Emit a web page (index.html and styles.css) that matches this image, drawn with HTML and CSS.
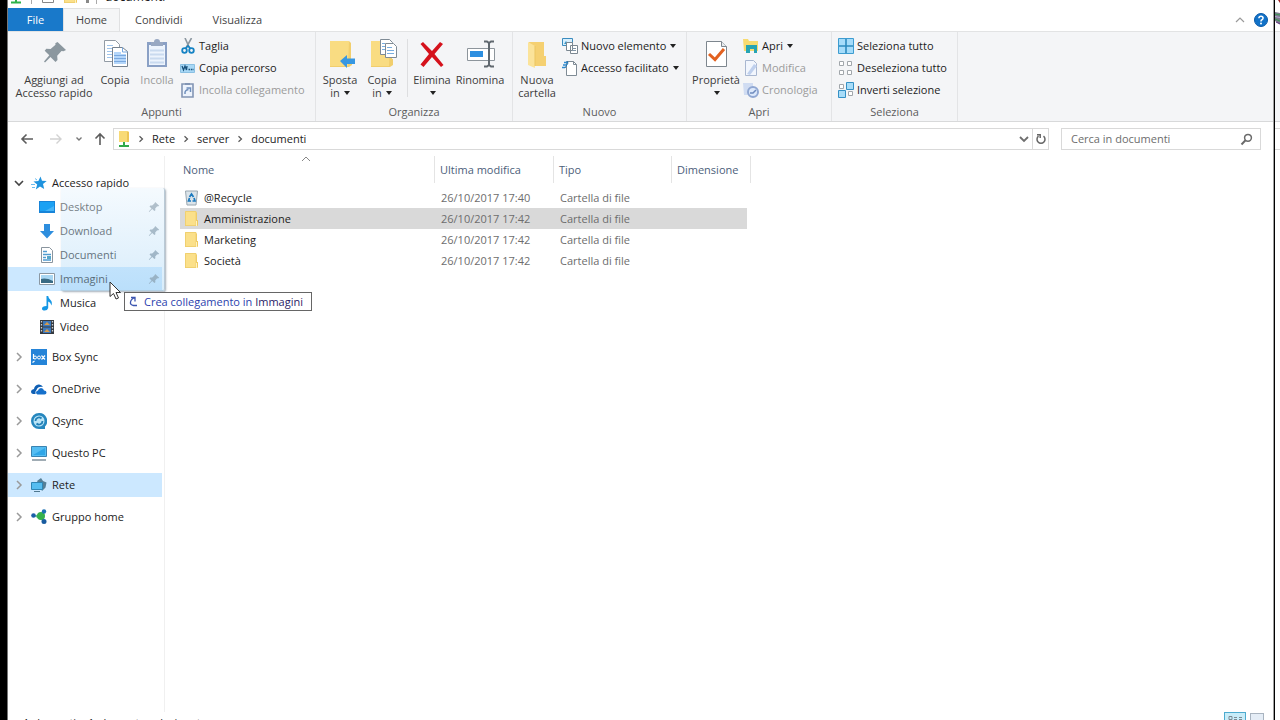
FILE: index.html
```html
<!DOCTYPE html>
<html lang="it">
<head>
<meta charset="utf-8">
<title>documenti</title>
<link rel="stylesheet" href="styles.css">
</head>
<body>
<svg class="defs" width="0" height="0" aria-hidden="true">
  <defs>
    <symbol id="folder" viewBox="0 0 16 16"><path d="M1 0h11v15H1z" fill="#fbe08a"/><path d="M12 1l1 1v7h1v5.500l-1 .5H1v-1h11z" fill="#efc95f"/><path d="M1.500.5h10.500v14H1.500z" fill="none" stroke="#f0d070"/><path d="M12.500 10v5" stroke="#fff3c0"/></symbol>
    <symbol id="pin" viewBox="0 0 12 12"><path d="M7.200 1l4 3.800-1.200.6-.8-.2-2 2.200.2 1.900-1 .8-2.200-2.200L1.200 11l-.4-.4 2.700-3.200-2-1.900.8-1 1.900.1 2.200-2z" fill="#8d9aa4"/></symbol>
    <symbol id="next" viewBox="0 0 10 10"><path d="M3 1l4 4-4 4" fill="none" stroke="#9a9a9a" stroke-width="1.500"/></symbol>
    <symbol id="crumb" viewBox="0 0 8 8"><path d="M2.500 1.200l3 2.800-3 2.800" fill="none" stroke="#555" stroke-width="1.200"/></symbol>
  </defs>
</svg>
<div class="edge-left"></div>
<main class="window">
  <header class="titlebar">
    <svg width="16" height="16" viewBox="0 0 16 16"><path d="M4 1h8v10H4z" fill="#f6d672"/><path d="M8 11v3M3 14.500h10" stroke="#2db24a" stroke-width="2"/></svg>
    <span class="title-sep"></span>
    <svg class="title-page" width="16" height="16" viewBox="0 0 16 16"><path d="M2.500 1.500h11v13h-11z" fill="#fff" stroke="#888"/><path d="M5 10l2 2 3-3" stroke="#d77" fill="none"/></svg>
    <svg class="title-folder" width="16" height="16"><use href="#folder"/></svg>
    <span class="title-mark"></span>
    <span class="title-sep"></span>
    <h1 class="title-text">documenti</h1>
  </header>
  <nav class="tabs">
    <button class="tab tab-file">File</button>
    <button class="tab tab-home">Home</button>
    <button class="tab">Condividi</button>
    <button class="tab">Visualizza</button>
    <span class="grow"></span>
    <button class="tab-tool" aria-label="Riduci barra multifunzione"><svg width="10" height="8" viewBox="0 0 10 8"><path d="M1 6l4-4 4 4" fill="none" stroke="#9a9a9a" stroke-width="1.200"/></svg></button>
    <button class="tab-tool" aria-label="Guida"><svg width="14" height="14" viewBox="0 0 14 14"><circle cx="7" cy="7" r="6.500" fill="#1272c8" stroke="#0a5aa8"/><path d="M4.900 5.300Q5 3.300 7 3.300t2.100 1.800Q9.100 6.200 7.600 7 7 7.300 7 8.500" fill="none" stroke="#fff" stroke-width="1.500"/><circle cx="7" cy="10.500" r="1" fill="#fff"/></svg></button>
  </nav>

  <section class="ribbon">
    <div class="group g-appunti">
      <div class="tools">
        <button class="big w-wide"><svg width="32" height="34" viewBox="0 0 32 34"><path d="M19.500 7l8.500 8-2.500 1.300-2-.3-4.300 4.700.3 4.200-2 2-5-5-5.500 5.600-1-1 5.300-6.300-4.600-4.400 1.600-2 4.300.3 4.900-4.400-.2-1.500z" fill="#8b979f"/></svg><span>Aggiungi ad<br>Accesso rapido</span></button>
        <button class="big w-copy"><svg width="32" height="34" viewBox="0 0 32 34"><path d="M5.500 5.500h11l4 4v17h-15z" fill="#fff" stroke="#929ba5"/><path d="M8 10.500h6M8 13.500h10M8 16.500h10M8 19.500h10M8 22.500h10" stroke="#9fc4ec"/><path d="M13.500 12.500h10l5 4v15h-15z" fill="#fff" stroke="#76828f"/><path d="M15 17h7v2h5v10H15z" fill="#b4d6fa"/><path d="M23.500 12.500v4.500h5M15 20.500h12M15 23.500h12M15 26.500h12" stroke="#79a8df" fill="none"/></svg>Copia</button>
        <button class="big w-copy off"><svg width="32" height="34" viewBox="0 0 32 34"><path d="M6 7h20v25H6z" fill="#8aa0c5"/><path d="M8 10h16v20H8z" fill="#edf4fd"/><path d="M9 15.500h14M9 19.500h14M9 23.500h14M9 27.500h14" stroke="#c9daef" stroke-width="2"/><path d="M10 7h3q0-3 3-3t3 3h3v4H10z" fill="#98a8c2"/></svg>Incolla</button>
        <div class="stack">
          <button class="small"><svg width="16" height="16" viewBox="0 0 16 16"><path d="M5 0l4.500 10M11.500 0L6 10" stroke="#8c97a0" stroke-width="1.600"/><circle cx="4.500" cy="12.500" r="2.300" fill="none" stroke="#1683c4" stroke-width="1.800"/><circle cx="11.500" cy="12.500" r="2.300" fill="none" stroke="#1683c4" stroke-width="1.800"/><path d="M5.500 10.500L8 8l2.500 2.500" stroke="#1683c4" stroke-width="1.600" fill="none"/></svg>Taglia</button>
          <button class="small"><svg width="16" height="16" viewBox="0 0 16 16"><path d="M.5 4.500h14v8H.5z" fill="#a8d8f6" stroke="#8ac0e3"/><path d="M2 6l1.500 4L5 6l1.500 4L7 6M8.500 9.500h1.500M10.800 9.500h1.200M12.500 9.500h1" stroke="#19517b" stroke-width="1.300" fill="none"/></svg>Copia percorso</button>
          <button class="small off"><svg width="16" height="16" viewBox="0 0 16 16"><path d="M2 2h11v13H2z" fill="#edf3fc" stroke="#8295b4" stroke-width="1.600"/><path d="M5 1h5v2H5z" fill="#8295b4"/><path d="M5 12q-.5-4 3.500-4.500M6.500 6h4v4" fill="none" stroke="#6f8fbc" stroke-width="1.500"/></svg>Incolla collegamento</button>
        </div>
      </div>
      <h2 class="group-name">Appunti</h2>
    </div>
    <div class="group g-organizza">
      <div class="tools">
        <button class="big w-copy"><svg width="32" height="34" viewBox="0 0 32 34"><path d="M6 6h19v26H6z" fill="#f9dc82"/><path d="M25 6l2 2v16h1v6l-3 2H6v-1h18z" fill="#f1ce6d"/><path d="M16 26l7-6v3.500h8v5.500h-8v4z" fill="#3797e1"/></svg>Sposta<span>in <i class="caret"></i></span></button>
        <button class="big w-copy"><svg width="32" height="34" viewBox="0 0 32 34"><path d="M5 6h19v26H5z" fill="#f9dc82"/><path d="M24 6l2 2v16h1v6l-3 2H5v-1h18z" fill="#f1ce6d"/><path d="M14.500 4.500h9l3 3v12h-12z" fill="#fff" stroke="#7f8b95"/><path d="M19.500 8.500h8l3 3v11h-11z" fill="#fff" stroke="#7f8b95"/><path d="M16 8.500h3M16 11.500h3M16 14.500h3M21 12.500h5M21 15.500h7M21 18.500h7" stroke="#79aee0"/></svg>Copia<span>in <i class="caret"></i></span></button>
        <span class="rule"></span>
        <button class="big w-del"><svg width="32" height="34" viewBox="0 0 32 34"><path d="M4.500 9l2.500-2 9 9 8-9 3 2-8.500 10L27.500 30l-2.500 2-9-10-8.500 10-3-2.500L13 19z" fill="#d5121c"/></svg>Elimina<span><i class="caret"></i></span></button>
        <button class="big w-ren"><svg width="32" height="34" viewBox="0 0 32 34"><path d="M3.500 13.500h27v12h-27z" fill="#fff" stroke="#8d959c"/><path d="M6 16h13v6H6z" fill="#2d8fe0"/><path d="M20 6.500h3l2 1.500 2-1.500h3M20 31.500h3l2-1.500 2 1.500h3M25 8v22" fill="none" stroke="#60686f" stroke-width="2"/></svg>Rinomina</button>
      </div>
      <h2 class="group-name">Organizza</h2>
    </div>
    <div class="group g-nuovo">
      <div class="tools">
        <button class="big w-new"><svg width="32" height="34" viewBox="0 0 32 34"><path d="M8 7h15v14h2v10H11z" fill="#f5d071"/><path d="M7 7l7 4v22l-7-3z" fill="#fbe39a"/><path d="M14 11v20" stroke="#ebc562"/></svg><span>Nuova<br>cartella</span></button>
        <div class="stack">
          <button class="small"><svg width="16" height="16" viewBox="0 0 16 16"><path d="M.5.500h10v7H.500z" fill="#d8effd" stroke="#3b8cbf"/><path d="M2 6l2-3 2 3" fill="#3996c7"/><path d="M4.500 4.500h6v8h-6zM8.500 7.500h7v8h-7z" fill="#fff" stroke="#7b8791"/><path d="M10 10.500h4M10 12.500h4" stroke="#8194a5"/></svg>Nuovo elemento <i class="caret"></i></button>
          <button class="small"><svg width="16" height="16" viewBox="0 0 16 16"><path d="M4.500 1.500h7l3 3v11h-10z" fill="#fff" stroke="#7f8b95"/><path d="M11.500 1.500v3h3" fill="none" stroke="#7f8b95"/><path d="M2 2.500h4M1 5h4M0 7.500h3" stroke="#2e8bd0" stroke-width="1.500"/><path d="M5 1l1 2-3 5" stroke="#2574af" fill="none"/></svg>Accesso facilitato <i class="caret"></i></button>
        </div>
      </div>
      <h2 class="group-name">Nuovo</h2>
    </div>
    <div class="group g-apri">
      <div class="tools">
        <button class="big w-prop"><svg width="32" height="34" viewBox="0 0 32 34"><path d="M6.500 6.500h15l5 5v20h-20z" fill="#fff" stroke="#7d868e"/><path d="M21.500 6.500v5h5" fill="#e7ebee" stroke="#7d868e"/><path d="M9 19l6 5.500L24 14" fill="none" stroke="#e26120" stroke-width="3"/></svg>Proprietà<span><i class="caret"></i></span></button>
        <div class="stack">
          <button class="small"><svg width="16" height="16" viewBox="0 0 16 16"><path d="M0 1h5l1 2h9v10H1z" fill="#f8db70"/><path d="M3 15V7h11v8h-3v-4H7v4z" fill="#27a4b3"/></svg>Apri <i class="caret"></i></button>
          <button class="small off"><svg width="16" height="16" viewBox="0 0 16 16"><path d="M2.500.5h8l3 3v12h-11z" fill="#f2f6fd" stroke="#a9b7d0"/><path d="M4 14l7-10 3 2-7 9z" fill="#bfd0ed"/></svg>Modifica</button>
          <button class="small off"><svg width="16" height="16" viewBox="0 0 16 16"><path d="M0 1h10v12H1z" fill="#d0dcf2"/><circle cx="10" cy="10" r="5" fill="#dce8fb" stroke="#90a7d2" stroke-width="2"/><path d="M7 11h3l3-3" fill="none" stroke="#6e8abd" stroke-width="1.500"/></svg>Cronologia</button>
        </div>
      </div>
      <h2 class="group-name">Apri</h2>
    </div>
    <div class="group g-seleziona">
      <div class="tools">
        <div class="stack">
          <button class="small"><svg width="16" height="16" viewBox="0 0 16 16"><path d="M.5.5h15v15H.5z" fill="#a5dcfa" stroke="#3d9cd0"/><path d="M8 1v14M1 8h14" stroke="#2c8abf" stroke-width="1.600"/></svg>Seleziona tutto</button>
          <button class="small"><svg width="16" height="16" viewBox="0 0 16 16"><path d="M1.500 1.500h4v4h-4zM9.500 1.500h4v4h-4zM1.500 10.500h4v4h-4zM9.500 10.500h4v4h-4z" fill="#fff" stroke="#a1a6ab"/></svg>Deseleziona tutto</button>
          <button class="small"><svg width="16" height="16" viewBox="0 0 16 16"><path d="M1.500 2.500h4v4h-4zM10.500 9.500h4v4h-4z" fill="#fff" stroke="#a1a6ab"/><path d="M8.500.5h7v7h-7zM.5 8.500h7v7h-7z" fill="#a8dcf8" stroke="#3490c5"/></svg>Inverti selezione</button>
        </div>
      </div>
      <h2 class="group-name">Seleziona</h2>
    </div>
  </section>

  <div class="addressbar">
    <div class="history">
      <button class="nav-btn b-back" aria-label="Indietro"><svg width="14" height="12" viewBox="0 0 14 12"><path d="M13 6H2M6.500 1.500L2 6l4.500 4.500" fill="none" stroke="#5d5d5d" stroke-width="1.600"/></svg></button>
      <button class="nav-btn b-fwd" aria-label="Avanti"><svg width="14" height="12" viewBox="0 0 14 12"><path d="M1 6h11M7.500 1.500L12 6l-4.500 4.500" fill="none" stroke="#d2d2d2" stroke-width="1.400"/></svg></button>
      <button class="nav-btn b-rec" aria-label="Percorsi recenti"><svg width="8" height="6" viewBox="0 0 8 6"><path d="M1.500 1.500L4 4l2.500-2.500" fill="none" stroke="#777" stroke-width="1.400"/></svg></button>
      <button class="nav-btn b-up" aria-label="Su"><svg width="12" height="14" viewBox="0 0 12 14"><path d="M6 13V2M1.500 6.500L6 2l4.500 4.500" fill="none" stroke="#5d5d5d" stroke-width="1.600"/></svg></button>
    </div>
    <div class="path">
      <svg class="path-icon" width="16" height="18" viewBox="0 0 16 18"><path d="M3 1h9l1 1v10H3z" fill="#f8da76"/><path d="M12 2v10" stroke="#e8be4d" stroke-width="1.500"/><path d="M8 12v3M3 16h10" stroke="#30a949" stroke-width="2"/></svg>
      <svg class="crumb" width="8" height="8"><use href="#crumb"/></svg><a class="part" href="#">Rete</a>
      <svg class="crumb" width="8" height="8"><use href="#crumb"/></svg><a class="part" href="#">server</a>
      <svg class="crumb" width="8" height="8"><use href="#crumb"/></svg><a class="part" href="#">documenti</a>
      <span class="grow"></span>
      <button class="path-btn" aria-label="Percorsi precedenti"><svg width="10" height="8" viewBox="0 0 10 8"><path d="M1 2l4 4 4-4" fill="none" stroke="#6e6e6e" stroke-width="1.800"/></svg></button>
      <button class="path-btn path-refresh" aria-label="Aggiorna"><svg width="12" height="12" viewBox="0 0 12 12"><path d="M8.500 3.200a4 4 0 1 1-5 0M2 1.800h3.200V5" fill="none" stroke="#666" stroke-width="1.500"/></svg></button>
    </div>
    <label class="search">
      <input class="search-input" type="text" placeholder="Cerca in documenti" aria-label="Cerca in documenti">
      <svg width="13" height="13" viewBox="0 0 13 13"><circle cx="8" cy="4.800" r="3.400" fill="none" stroke="#6a6a6a" stroke-width="1.500"/><path d="M5.500 7.300L1.500 11.500" stroke="#6a6a6a" stroke-width="2"/></svg>
    </label>
  </div>

  <div class="content">
    <nav class="tree">
      <a class="node" href="#"><svg class="arrow" width="10" height="10" viewBox="0 0 10 10"><path d="M1 3l4 4 4-4" fill="none" stroke="#444" stroke-width="1.600"/></svg><svg width="16" height="16" viewBox="0 0 16 16"><path d="M9.500 1.500l1.500 4.300 4.700.3-3.700 3 1.200 5-4.200-2.600-4.200 3.100 1.400-5L2.500 6.500l4.900-.6z" fill="#1f93de"/><path d="M0 9.500h4M1 12.500h3M4 3.500l2 1.500" stroke="#6cbcee"/></svg>Accesso rapido</a>
      <div class="branch">
        <a class="node sub" href="#"><svg width="16" height="16" viewBox="0 0 16 16"><path d="M0 2h16v12H0z" fill="#1784d8"/><path d="M1 3h14v9H1z" fill="#1ba1f3"/><path d="M6 12h9V7z" fill="#47b5f7"/></svg>Desktop<svg class="pin" width="12" height="12"><use href="#pin"/></svg></a>
        <a class="node sub" href="#"><svg width="16" height="16" viewBox="0 0 16 16"><path d="M5 1h6v7h4l-7 7.500L1 8h4z" fill="#2e8ede"/></svg>Download<svg class="pin" width="12" height="12"><use href="#pin"/></svg></a>
        <a class="node sub" href="#"><svg width="16" height="16" viewBox="0 0 16 16"><path d="M2.500.5h8l3 3v12h-11z" fill="#fff" stroke="#8a959e"/><path d="M4 4.500h4M4 7.500h8M4 10.500h3M4 13h8" stroke="#4f9bd0" stroke-width="1.500"/><path d="M8 9h4v3H8z" fill="#55a6c9"/></svg>Documenti<svg class="pin" width="12" height="12"><use href="#pin"/></svg></a>
        <a class="node sub target" href="#"><svg width="16" height="16" viewBox="0 0 16 16"><path d="M.5 2.500h15v11H.5z" fill="#fff" stroke="#8b98a3"/><path d="M2 4h12v8H2z" fill="#a9d7f3"/><path d="M2 8q5-1.500 12 2v2H2z" fill="#396a83"/></svg>Immagini<svg class="pin" width="12" height="12"><use href="#pin"/></svg></a>
        <a class="node sub" href="#"><svg width="16" height="16" viewBox="0 0 16 16"><path d="M7.500 1h1.700q.3 2.500 2.300 4t1 5.500q-1-3.500-3.300-4v6.500q-.7 2.500-3.500 2.500T3 13.500q0-2.500 4.500-2.500z" fill="#1597e5"/></svg>Musica</a>
        <a class="node sub" href="#"><svg width="16" height="16" viewBox="0 0 16 16"><path d="M1 1h14v14H1z" fill="#353a40"/><path d="M4 2h8v5.500H4z" fill="#3c78bd"/><path d="M4 8.500h8V14H4z" fill="#3c78bd"/><path d="M5 6l3-3 3 3zM5 13l3-3 3 3z" fill="#d59b4c"/><path d="M2.500 2v12M13.500 2v12" stroke="#c9ced3" stroke-width="1.300" stroke-dasharray="1.500 1.500"/></svg>Video</a>
      </div>
      <div class="roots">
        <a class="node" href="#"><svg class="arrow" width="10" height="10"><use href="#next"/></svg><svg width="16" height="16" viewBox="0 0 16 16"><path d="M0 0h16v16H0z" fill="#2584d8"/><path d="M2.500 5v5M10.500 6.500l3.500 4M14 6.500l-3.500 4M1.500 13.500l2-1.500" stroke="#fff" stroke-width="1.200"/><circle cx="4" cy="8.500" r="1.500" fill="none" stroke="#fff"/><circle cx="8" cy="8.500" r="1.500" fill="none" stroke="#fff"/></svg>Box Sync</a>
        <a class="node" href="#"><svg class="arrow" width="10" height="10"><use href="#next"/></svg><svg width="16" height="16" viewBox="0 0 16 16"><path d="M0 11q0-2.500 3-3 .5-4 4.500-4.500 3-.3 4.500 2.500Q7 5 5.500 9 4 10 4.500 13H2q-2-.5-2-2z" fill="#0f5fb3"/><path d="M6.500 13.500q-1.500-.5-1.500-2t2-2Q7.500 7 10 7t3 2.500q2.500 0 2.500 2t-2 2z" fill="#1670cb"/></svg>OneDrive</a>
        <a class="node" href="#"><svg class="arrow" width="10" height="10"><use href="#next"/></svg><svg width="16" height="16" viewBox="0 0 16 16"><path d="M8 0a8 8 0 1 0 0 16h6v-2.500A8 8 0 0 0 8 0z" fill="#2687be"/><circle cx="8" cy="8" r="5.500" fill="#b9e4f7"/><path d="M4.500 8A3.500 3.500 0 0 1 10.500 5.500M11.500 8A3.500 3.500 0 0 1 5.500 10.500" fill="none" stroke="#2380b6" stroke-width="1.800"/></svg>Qsync</a>
        <a class="node" href="#"><svg class="arrow" width="10" height="10"><use href="#next"/></svg><svg width="16" height="16" viewBox="0 0 16 16"><path d="M.5 1.500h15v10H.5z" fill="#55bdf2" stroke="#3a83b1"/><path d="M2 10l12-7v7z" fill="#2fa6e7"/><path d="M1 15h14" stroke="#81909b" stroke-width="1.500"/></svg>Questo PC</a>
        <a class="node current" href="#"><svg class="arrow" width="10" height="10"><use href="#next"/></svg><svg width="16" height="16" viewBox="0 0 16 16"><path d="M6 4l4-3 2 3 3.500 1.500-1 5L11 14z" fill="#547f97"/><path d="M.5 5.500h11v7H.5z" fill="#55bdf0" stroke="#2f86b5"/><path d="M3 14.500h6" stroke="#50788f"/></svg>Rete</a>
        <a class="node" href="#"><svg class="arrow" width="10" height="10"><use href="#next"/></svg><svg width="16" height="16" viewBox="0 0 16 16"><path d="M3 7l9-4v9z" fill="#5cbd8c"/><circle cx="2.500" cy="6.500" r="2.300" fill="#1b5fa8"/><circle cx="10" cy="7" r="4" fill="#36b04c"/><circle cx="13" cy="2.500" r="2.200" fill="#1b70b2"/><circle cx="13" cy="12.500" r="2.500" fill="#185b9f"/></svg>Gruppo home</a>
      </div>
    </nav>

    <section class="files">
      <svg class="sort" width="10" height="6" viewBox="0 0 10 6"><path d="M1 5l4-4 4 4" fill="none" stroke="#888"/></svg>
      <table class="list">
        <thead>
          <tr><th class="c-name">Nome</th><th class="c-date">Ultima modifica</th><th class="c-type">Tipo</th><th class="c-size">Dimensione</th><th class="c-end"></th></tr>
        </thead>
        <tbody>
          <tr><td><span class="file"><svg width="16" height="16" viewBox="0 0 16 16"><path d="M1.500 1h12l-1.500 14H3z" fill="#dbe4ea" stroke="#9aa7b0"/><path d="M5.500 7l2-3 2 3M10 8l1 3H8.500M7 11H4.500L5.500 8" fill="none" stroke="#1c79be" stroke-width="1.700"/></svg>@Recycle</span></td><td>26/10/2017 17:40</td><td>Cartella di file</td><td></td></tr>
          <tr class="picked"><td><span class="file"><svg width="16" height="16"><use href="#folder"/></svg>Amministrazione</span></td><td>26/10/2017 17:42</td><td>Cartella di file</td><td></td></tr>
          <tr><td><span class="file"><svg width="16" height="16"><use href="#folder"/></svg>Marketing</span></td><td>26/10/2017 17:42</td><td>Cartella di file</td><td></td></tr>
          <tr><td><span class="file"><svg width="16" height="16"><use href="#folder"/></svg>Società</span></td><td>26/10/2017 17:42</td><td>Cartella di file</td><td></td></tr>
        </tbody>
      </table>
    </section>

    <div class="ghost"></div>
    <div class="drop-tip"><svg width="9" height="11" viewBox="0 0 9 11"><path d="M2 1.500h4v4M6 1.500Q2 3 1.500 6t3 3.500H8" fill="none" stroke="#3b55b0" stroke-width="1.300"/></svg><span>Crea collegamento in <b>Immagini</b></span></div>
    <svg class="pointer" width="13" height="20" viewBox="0 0 13 20"><path d="M1 1v14.500l3.500-3L7 18l2.500-1-2.500-5.500h4.500z" fill="#fff" stroke="#333"/></svg>
  </div>

  <footer class="status">
    <span class="count">4 elementi</span><span>1 elemento selezionato</span>
    <span class="grow"></span>
    <button class="view view-on" aria-label="Dettagli"><svg width="14" height="8" viewBox="0 0 14 8"><path d="M1 1.500h3v3H1zM6 2.500h3M6 4.500h3M11 2.500h3M11 4.500h3" fill="none" stroke="#7c8a93"/></svg></button>
    <button class="view" aria-label="Icone grandi"></button>
  </footer>
</main>
<aside class="behind">
  <div class="behind-top"><svg width="5" height="31" viewBox="0 0 5 31"><path d="M3 0h2v3z" fill="#a01f1f"/><path d="M0 12l5 1v11l-5-3z" fill="#7b7d8c"/><path d="M0 14l5 1M0 19l5 2" stroke="#3c9a55"/><path d="M0 16.500l5 1" stroke="#b5a2d4"/><path d="M1 22l4 2" stroke="#5a2779"/></svg></div>
  <div class="behind-ribbon"></div>
  <div class="behind-box"></div>
</aside>
</body>
</html>
```
FILE: styles.css
```css
* { box-sizing: border-box; }
body {
  margin: 0;
  height: 100vh;
  display: flex;
  overflow: hidden;
  background: #fff;
  font: 11px/14px "Open Sans", "Noto Sans", sans-serif;
  color: #1c1c1c;
}
button { font: inherit; color: inherit; background: none; border: 0; padding: 0; margin: 0; }
a { color: inherit; text-decoration: none; }
svg { display: block; flex: none; }
.defs { position: absolute; }
.grow { flex: 1; }

.edge-left { width: 8px; background: #000; border-right: 1px solid #777; }
.window { flex: 1; min-width: 0; display: flex; flex-direction: column; border-right: 1px solid #a0a0a0; }
.behind { width: 6px; border-left: 1px solid #000; }
.behind-top { height: 31px; overflow: hidden; }
.behind-ribbon { height: 91px; background: #f4f5f7; border-top: 1px solid #e0e0e0; border-bottom: 1px solid #d5d6d8; }
.behind-box { height: 22px; margin-top: 6px; border: 1px solid #d9d9d9; border-width: 1px 0; }

.titlebar { height: 8px; display: flex; align-items: flex-end; overflow: hidden; padding: 0 0 4px; }
.title-sep { width: 1px; height: 4px; margin: 0 8px 0 7px; background: #aaa; }
.title-folder { margin: 0 7px 0 7px; }
.title-mark { width: 3px; height: 3px; margin-bottom: 1px; background: #888; }
.title-text { margin: 0; font-size: 12px; line-height: 14px; font-weight: 400; }

.tabs { height: 23px; display: flex; align-items: center; padding-right: 5px; }
.tab { height: 23px; padding: 0 15px; color: #444; }
.tab-file { padding: 0; width: 55px; background: #1979ca; color: #fff; }
.tab-home { padding: 0; width: 57px; background: #f5f6f7; border: 1px solid #e0e1e2; border-bottom: 0; }
.tab-tool { margin-left: 9px; }

.ribbon { display: flex; height: 91px; background: #f4f5f7; border-top: 1px solid #e2e3e4; border-bottom: 1px solid #d8d9da; }
.group { display: flex; flex-direction: column; padding-top: 3px; border-right: 1px solid #e3e4e6; }
.g-appunti { width: 308px; }
.g-appunti .tools { padding-left: 6px; }
.g-organizza { width: 197px; }
.g-organizza .tools { padding-left: 3px; }
.g-nuovo { width: 174px; }
.g-nuovo .tools { padding-left: 1px; }
.g-apri { width: 145px; }
.g-apri .tools { padding-left: 4px; }
.g-seleziona { width: 126px; }
.g-seleziona .tools { padding-left: 4px; }
.tools { display: flex; height: 70px; }
.group-name { margin: 0; font-size: 11px; line-height: 14px; font-weight: 400; color: #5c5c5c; text-align: center; }
.big { display: flex; flex-direction: column; align-items: center; line-height: 13px; white-space: nowrap; color: #3c3c3c; }
.big svg { margin-bottom: 4px; }
.w-wide { width: 80px; }
.w-copy { width: 42px; }
.w-del { width: 46px; }
.w-ren { width: 50px; }
.w-new { width: 46px; }
.w-prop { width: 50px; }
.rule { width: 1px; margin: 4px 1px 8px 4px; background: #dddee0; }
.stack { display: flex; flex-direction: column; padding-left: 2px; }
.small { display: flex; align-items: center; gap: 3px; height: 22px; white-space: nowrap; }
.big.off, .off { color: #9b9b9b; }
.caret { display: inline-block; border: 3px solid transparent; border-top: 4px solid #222; border-bottom: 0; vertical-align: 2px; margin-left: 1px; }

.addressbar { display: flex; align-items: center; height: 34px; padding-right: 12px; }
.history { display: flex; align-items: center; width: 105px; padding-left: 12px; }
.b-fwd { margin-left: 15px; }
.b-rec { margin-left: 12px; }
.b-up { margin-left: 11px; }
.path { flex: 1; display: flex; align-items: center; height: 22px; border: 1px solid #d9d9d9; }
.path-icon { margin: 0 5px 0 2px; }
.crumb { margin-right: 7px; }
.part { margin-right: 7px; }
.path-btn { width: 16px; height: 20px; display: grid; place-items: center; }
.path-refresh { border-left: 1px solid #d9d9d9; }
.search { display: flex; align-items: center; width: 200px; height: 22px; margin-left: 12px; padding: 0 7px 0 9px; border: 1px solid #d9d9d9; }
.search-input { flex: 1; min-width: 0; border: 0; padding: 0; font: inherit; outline: 0; }
.search-input::placeholder { color: #6d6d6d; opacity: 1; }

.content { flex: 1; min-height: 0; display: flex; position: relative; }
.tree { width: 157px; padding-top: 15px; border-right: 1px solid #f0f0f0; }
.node { display: flex; align-items: center; gap: 5px; height: 24px; padding-left: 6px; margin-right: 2px; }
.node .arrow { margin-right: 2px; }
.sub { padding-left: 31px; }
.pin { margin-left: auto; margin-right: 2px; }
.target, .current { background: #cce8ff; }
.roots { display: flex; flex-direction: column; gap: 8px; margin-top: 6px; }

.files { flex: 1; padding-left: 15px; position: relative; }
.sort { position: absolute; left: 136px; top: 0; }
.list { border-collapse: collapse; table-layout: fixed; width: 571px; }
.list th { height: 31px; padding: 0 0 4px 6px; text-align: left; font-weight: 400; color: #4c607a; white-space: nowrap; background: linear-gradient(#e4e4e4, #e4e4e4) left top / 1px 27px no-repeat; }
.list .c-name { width: 254px; padding-left: 3px; background: none; }
.c-date { width: 119px; }
.c-type { width: 118px; }
.c-size { width: 76px; }
.list .c-end { width: 4px; padding: 0; background-position: right top; }
.list td { height: 21px; padding: 0 0 0 7px; color: #6d6d6d; white-space: nowrap; }
.list td:first-child { color: #1c1c1c; padding-left: 4px; }
.file { display: flex; align-items: center; gap: 4px; }
.picked td { background: #d9d9d9; }

.ghost { position: absolute; left: 53px; top: 32px; width: 104px; height: 103px; background: linear-gradient(rgba(232, 244, 253, .45), rgba(160, 210, 245, .4)); border-right: 1px solid #b9cad6; border-bottom: 1px solid #b3cfe2; border-radius: 2px; box-shadow: 1px 1px 2px rgba(80, 100, 120, .5); }
.drop-tip { position: absolute; left: 116px; top: 136px; height: 19px; display: flex; align-items: center; gap: 6px; padding: 0 8px 0 4px; background: #fff; border: 1px solid #666; color: #2b3fae; white-space: nowrap; }
.drop-tip b { font-weight: 400; color: #2a1c66; }
.pointer { position: absolute; left: 101px; top: 125px; }

.status { display: flex; align-items: flex-start; height: 8px; overflow: hidden; padding: 0 9px 0 14px; line-height: 22px; }
.count { margin-right: 12px; }
.view { width: 14px; height: 12px; margin: 1px 0 0 4px; border: 1px solid #a9b4c0; background: #e5edf6; }
.view-on { width: 22px; margin-top: 0; padding: 2px 3px; border-color: #4dabcf; background: #c8ecf8; }
```
